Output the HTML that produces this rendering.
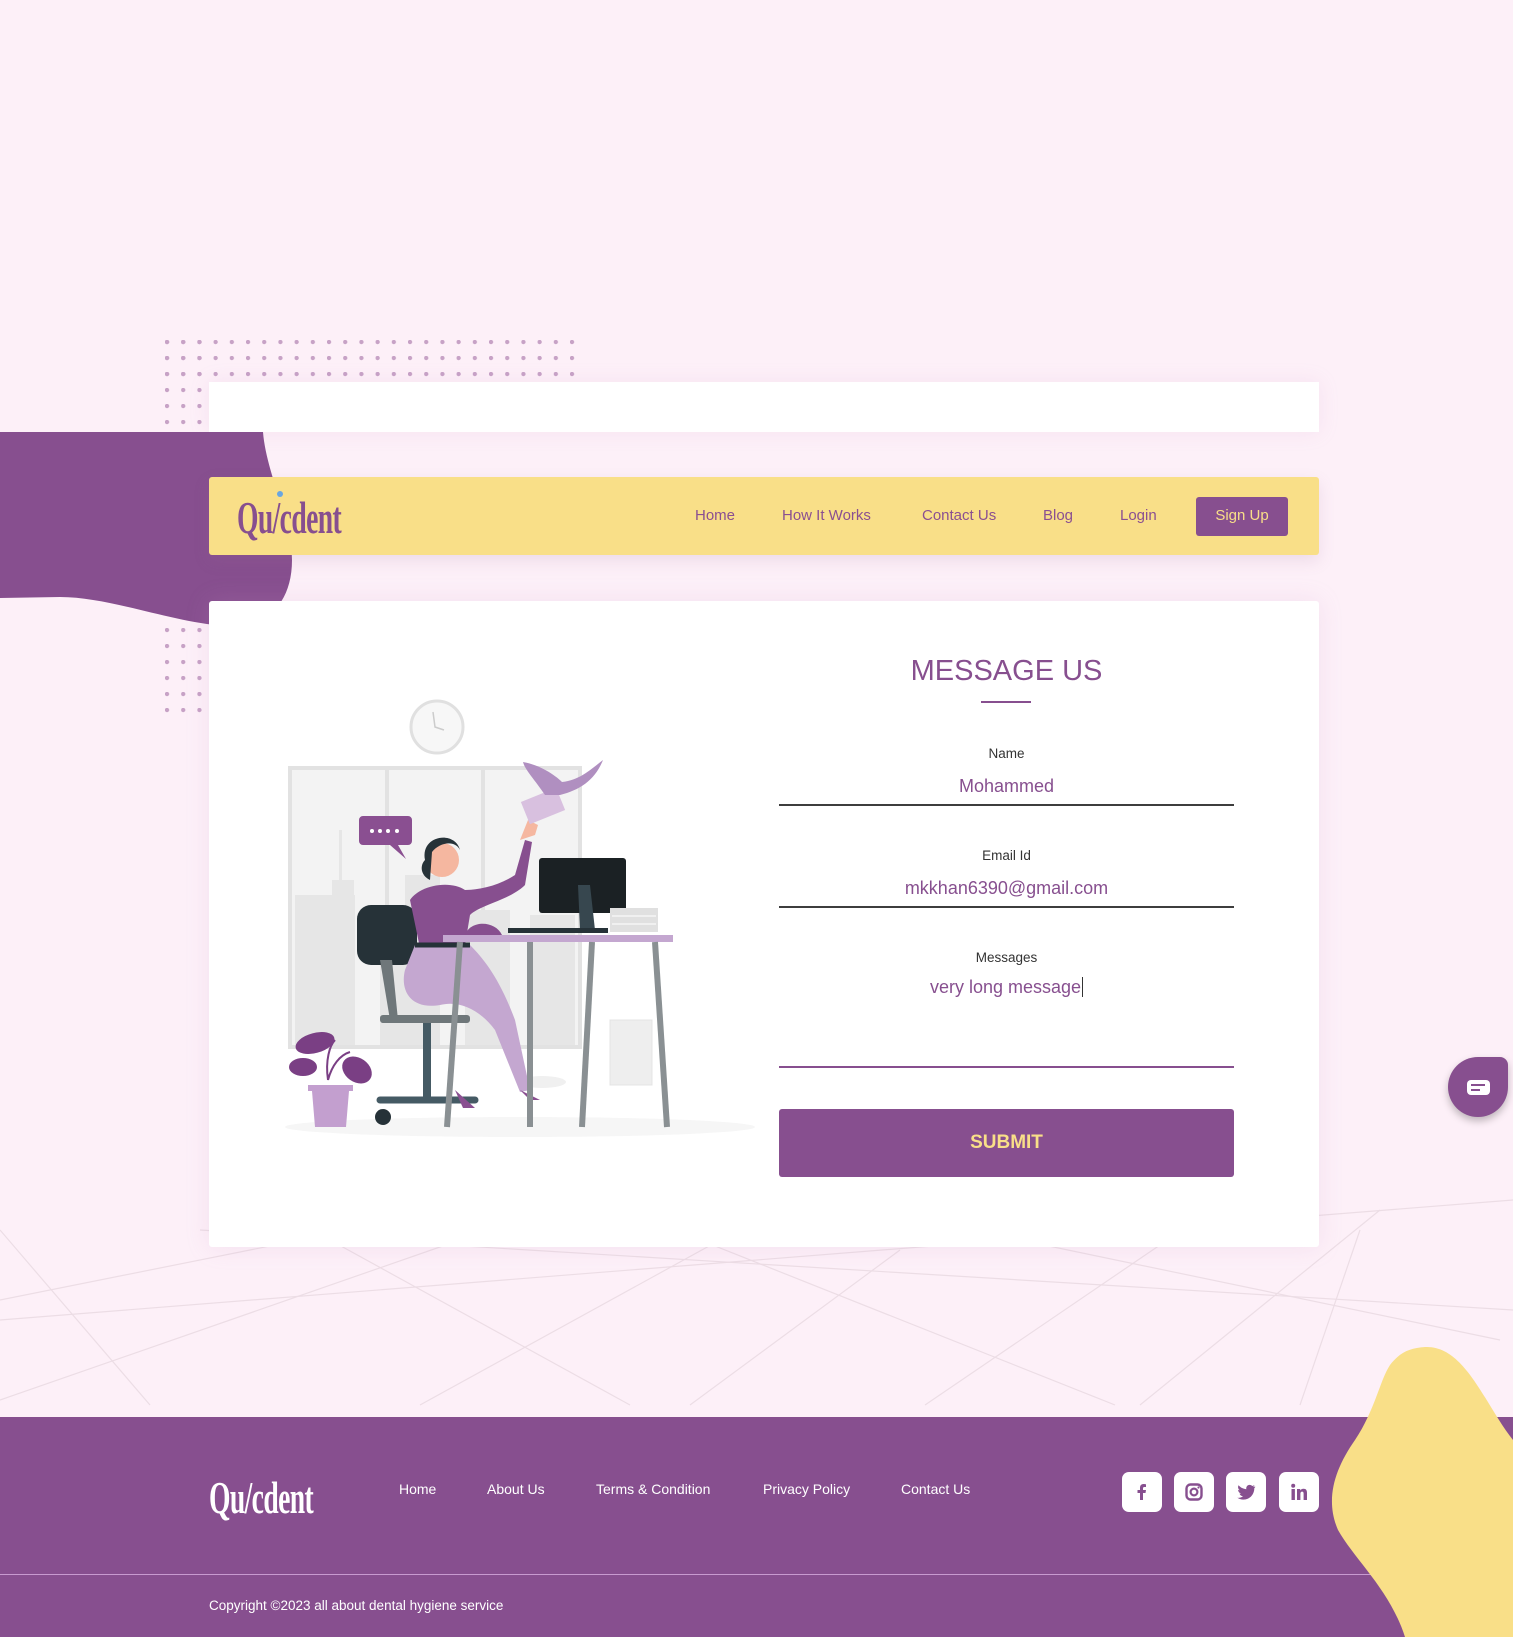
<!DOCTYPE html>
<html><head><meta charset="utf-8"><style>
*{margin:0;padding:0;box-sizing:border-box}
body{width:1513px;height:1637px;background:#fdf0f8;font-family:"Liberation Sans",sans-serif;position:relative;overflow:hidden}
.abs{position:absolute}
.logo{font-family:"Liberation Serif",serif;font-size:46px;font-weight:bold;letter-spacing:-1px;transform:scaleX(.6);transform-origin:left center;white-space:nowrap;line-height:1}
.nav a{position:absolute;top:497px;font-size:15px;color:#8a4f91;text-decoration:none;line-height:38px}
.lbl{position:absolute;left:779px;width:455px;text-align:center;font-size:13.5px;color:#333}
.val{position:absolute;left:779px;width:455px;text-align:center;font-size:18px;color:#874f8f}
.ln{position:absolute;left:779px;width:455px;height:2px;background:#3d3d3d}
.fl{position:absolute;top:1481px;color:#fff;font-size:14px}
.soc{position:absolute;top:1472px;width:40px;height:40px;background:#fff;border-radius:7px;display:flex;align-items:center;justify-content:center}
</style></head><body>
<svg class="abs" style="left:0;top:0" width="1513" height="1637">
<defs><pattern id="dp" x="165" y="340" width="16.2" height="16" patternUnits="userSpaceOnUse"><circle cx="2" cy="2" r="2.2" fill="#c7a2c6"/></pattern></defs>
<rect x="165" y="335" width="410" height="42" fill="url(#dp)"/>
<rect x="163" y="335" width="40" height="95" fill="url(#dp)"/>
<rect x="163" y="620" width="40" height="100" fill="url(#dp)"/>
<g stroke="#ecdde5" stroke-width="1.2" fill="none">
<line x1="0" y1="1300" x2="600" y2="1180"/><line x1="0" y1="1400" x2="460" y2="1240"/>
<line x1="0" y1="1230" x2="150" y2="1405"/><line x1="330" y1="1240" x2="630" y2="1405"/>
<line x1="420" y1="1405" x2="720" y2="1240"/><line x1="690" y1="1405" x2="900" y2="1250"/>
<line x1="700" y1="1240" x2="1115" y2="1405"/><line x1="925" y1="1405" x2="1160" y2="1245"/>
<line x1="1020" y1="1240" x2="1500" y2="1340"/><line x1="1140" y1="1405" x2="1380" y2="1210"/>
<line x1="1300" y1="1405" x2="1360" y2="1230"/><line x1="0" y1="1320" x2="1513" y2="1200"/>
<line x1="200" y1="1230" x2="1513" y2="1310"/>
</g>
</svg>
<div class="abs" style="left:209px;top:382px;width:1110px;height:50px;background:#fff;box-shadow:0 0 20px rgba(200,150,200,.15)"></div>
<svg class="abs" style="left:0;top:432px" width="300" height="200"><path d="M0,0 L263,0 C266,40 292,90 292,128 C292,175 262,198 225,194 C170,190 110,165 60,165 L0,166Z" fill="#874f8f"/></svg>
<div class="abs" style="left:209px;top:477px;width:1110px;height:78px;background:#f9df88;border-radius:3px;box-shadow:0 6px 16px rgba(150,100,150,.15)"></div>
<div class="abs logo" style="left:237px;top:495px;color:#874f8f">Qu/cdent</div>
<div class="abs" style="left:277px;top:491px;width:6px;height:6px;border-radius:50%;background:#6aa6e0"></div>
<div class="nav">
<a style="left:695px">Home</a><a style="left:782px">How It Works</a><a style="left:922px">Contact Us</a><a style="left:1043px">Blog</a><a style="left:1120px">Login</a>
<a style="left:1196px;width:92px;height:39px;background:#874f8f;color:#f9df88;border-radius:3px;text-align:center">Sign Up</a>
</div>
<div class="abs" style="left:209px;top:601px;width:1110px;height:646px;background:#fff;border-radius:3px;box-shadow:0 0 24px rgba(200,150,200,.18)"></div>
<svg class="abs" style="left:280px;top:690px" width="480" height="460" viewBox="0 0 480 460">
<ellipse cx="240" cy="437" rx="235" ry="10" fill="#f6f6f6"/>
<rect x="10" y="78" width="290" height="279" fill="#f3f3f3" stroke="#e2e2e2" stroke-width="4"/>
<line x1="107" y1="78" x2="107" y2="357" stroke="#e2e2e2" stroke-width="4"/><line x1="203" y1="78" x2="203" y2="357" stroke="#e2e2e2" stroke-width="4"/>
<g fill="#e6e6e6"><rect x="15" y="205" width="60" height="150"/><rect x="52" y="190" width="22" height="20"/><rect x="100" y="250" width="40" height="105"/><rect x="125" y="185" width="35" height="170"/><rect x="185" y="220" width="45" height="135"/><rect x="250" y="225" width="45" height="130"/><rect x="59" y="140" width="3" height="60"/></g>
<circle cx="157" cy="37" r="26" fill="#f7f7f7" stroke="#e0e0e0" stroke-width="3"/><path d="M153,22 L155,37 L164,40" stroke="#ccc" stroke-width="1.5" fill="none"/>
<ellipse cx="262" cy="392" rx="24" ry="6" fill="#f0f0f0"/><rect x="330" y="330" width="42" height="65" fill="#eee" stroke="#e4e4e4"/>
<path d="M79,130 a4,4 0 0 1 4,-4 h45 a4,4 0 0 1 4,4 v21 a4,4 0 0 1 -4,4 h-10 l8,14 l-16,-14 h-27 a4,4 0 0 1 -4,-4z" fill="#8a4f91"/>
<g fill="#fff"><circle cx="92" cy="141" r="2"/><circle cx="100" cy="141" r="2"/><circle cx="108" cy="141" r="2"/><circle cx="117" cy="141" r="2"/></g>
<rect x="77" y="215" width="60" height="60" rx="14" fill="#263238"/>
<path d="M100,270 L110,330 L118,330 L112,270Z" fill="#6f777a"/>
<rect x="100" y="325" width="90" height="8" rx="3" fill="#6f777a"/><rect x="143" y="333" width="8" height="75" fill="#455a64"/>
<path d="M100,410 L195,410" stroke="#455a64" stroke-width="7" stroke-linecap="round"/><circle cx="103" cy="427" r="8" fill="#263238"/>
<path d="M130,210 C140,195 170,190 185,200 C200,200 220,195 235,185 L245,150 L252,152 L245,195 C230,210 200,215 190,225 L185,255 L140,258Z" fill="#874f8f"/>
<path d="M135,255 L190,255 C205,270 220,290 235,330 L250,400 L240,402 L215,340 C200,320 180,310 160,315 C130,320 120,300 125,280Z" fill="#c4a7d0"/>
<path d="M135,255 L190,255" stroke="#263238" stroke-width="5"/>
<path d="M240,400 l10,10 h10 z" fill="#8a4f91"/><path d="M175,400 l8,18 h12z" fill="#8a4f91"/>
<circle cx="162" cy="170" r="17" fill="#f5b7a0"/><path d="M145,170 C140,145 175,140 180,160 C175,150 160,152 152,162 L150,190 C140,185 140,175 145,170Z" fill="#263238"/>
<path d="M240,150 L255,145 L258,135 L248,130Z" fill="#f5b7a0"/>
<rect x="244" y="104" width="38" height="24" transform="rotate(-22 263 116)" fill="#d8c0df"/>
<path d="M265,105 C255,90 245,80 243,72 C260,75 275,85 282,92 C300,90 310,80 323,70 C315,90 300,100 280,105Z" fill="#b08fc0"/>
<rect x="163" y="245" width="230" height="7" fill="#c4a7d0"/>
<g stroke="#8a9093" stroke-width="6"><line x1="180" y1="252" x2="167" y2="437"/><line x1="250" y1="252" x2="250" y2="437"/><line x1="312" y1="252" x2="302" y2="437"/><line x1="375" y1="252" x2="387" y2="437"/></g>
<rect x="259" y="168" width="87" height="55" rx="3" fill="#1b2124"/><path d="M298,195 L310,195 L315,240 L300,240Z" fill="#37474f"/>
<rect x="228" y="238" width="100" height="5" fill="#263238"/>
<rect x="330" y="218" width="48" height="24" fill="#e0e0e0"/><line x1="332" y1="226" x2="376" y2="226" stroke="#fff"/><line x1="332" y1="234" x2="376" y2="234" stroke="#fff"/>
<path d="M185,245 C190,230 215,230 222,245Z" fill="#874f8f"/>
<path d="M48,390 C45,370 50,355 55,350 M48,390 C52,375 60,365 70,362" stroke="#7a3f84" stroke-width="2" fill="none"/>
<ellipse cx="35" cy="353" rx="20" ry="10" fill="#7a3f84" transform="rotate(-15 35 353)"/><ellipse cx="23" cy="377" rx="14" ry="9" fill="#7a3f84"/><ellipse cx="77" cy="380" rx="16" ry="12" fill="#7a3f84" transform="rotate(35 77 380)"/>
<path d="M28,395 h45 v6 h-4 l-3,36 h-31 l-3,-36 h-4z" fill="#c39fcf"/>
</svg>
<div class="abs" style="left:779px;width:455px;top:655px;text-align:center;font-size:29px;color:#874f8f">MESSAGE US</div>
<div class="abs" style="left:981px;top:701px;width:50px;height:2px;background:#874f8f"></div>
<div class="lbl" style="top:746px">Name</div>
<div class="val" style="top:776px">Mohammed</div>
<div class="ln" style="top:804px"></div>
<div class="lbl" style="top:848px">Email Id</div>
<div class="val" style="top:878px">mkkhan6390@gmail.com</div>
<div class="ln" style="top:906px"></div>
<div class="lbl" style="top:950px">Messages</div>
<div class="val" style="top:977px">very long message<span style="border-left:1.5px solid #333;margin-left:1px"></span></div>
<div class="ln" style="top:1066px;background:#874f8f"></div>
<div class="abs" style="left:779px;top:1109px;width:455px;height:68px;background:#874f8f;border-radius:3px;color:#f9df88;font-weight:bold;font-size:19px;text-align:center;line-height:68px">SUBMIT</div>
<div class="abs" style="left:1448px;top:1057px;width:60px;height:60px;background:#874f8f;border-radius:50% 8px 50% 50%;box-shadow:0 4px 8px rgba(0,0,0,.25)"></div>
<div class="abs" style="left:1467px;top:1080px;width:23px;height:15px;background:#fff;border-radius:4px"></div>
<div class="abs" style="left:1471px;top:1084px;width:14px;height:2px;background:#874f8f"></div>
<div class="abs" style="left:1471px;top:1089px;width:9px;height:2px;background:#874f8f"></div>
<div class="abs" style="left:0;top:1417px;width:1513px;height:220px;background:#874f8f"></div>
<div class="abs" style="left:0;top:1574px;width:1513px;height:1px;background:#c89bd0"></div>
<div class="abs logo" style="left:209px;top:1475px;color:#fff">Qu/cdent</div>
<div class="fl" style="left:399px">Home</div><div class="fl" style="left:487px">About Us</div><div class="fl" style="left:596px">Terms &amp; Condition</div><div class="fl" style="left:763px">Privacy Policy</div><div class="fl" style="left:901px">Contact Us</div>
<div class="soc" style="left:1122px"><svg width="20" height="20" viewBox="0 0 20 20"><path d="M11,18 V11 H13.5 L14,8 H11 V6.5 C11,5.6 11.4,5 12.5,5 H14 V2.3 C13.5,2.2 12.5,2 11.5,2 C9.3,2 8,3.4 8,5.8 V8 H5.5 V11 H8 V18Z" fill="#874f8f"/></svg></div>
<div class="soc" style="left:1174px"><svg width="20" height="20" viewBox="0 0 20 20"><rect x="2.5" y="2.5" width="15" height="15" rx="4" fill="none" stroke="#874f8f" stroke-width="2.4"/><circle cx="10" cy="10" r="3.4" fill="none" stroke="#874f8f" stroke-width="2.2"/><circle cx="14.5" cy="5.5" r="1.1" fill="#874f8f"/></svg></div>
<div class="soc" style="left:1226px"><svg width="20" height="20" viewBox="0 0 20 20"><path d="M19,4.5 C18.3,4.8 17.6,5 16.9,5.1 C17.6,4.6 18.2,3.9 18.4,3.1 C17.7,3.5 17,3.8 16.2,4 C14.9,2.6 12.7,2.5 11.3,3.8 C10.4,4.7 10,6 10.3,7.2 C7.3,7 4.5,5.6 2.6,3.3 C1.6,5 2.1,7.2 3.8,8.3 C3.2,8.3 2.6,8.1 2.1,7.8 C2.1,9.6 3.4,11.1 5.1,11.5 C4.6,11.6 4,11.7 3.5,11.6 C4,13.1 5.4,14.2 7,14.2 C5.4,15.4 3.3,16 1.3,15.8 C3.1,17 5.2,17.6 7.3,17.6 C14.5,17.6 18.5,11.6 18.3,6 C19,5.5 19.6,4.9 19,4.5Z" fill="#874f8f"/></svg></div>
<div class="soc" style="left:1279px"><svg width="20" height="20" viewBox="0 0 20 20"><rect x="2.5" y="7" width="3.4" height="11" fill="#874f8f"/><circle cx="4.2" cy="3.8" r="2" fill="#874f8f"/><path d="M8,7 H11.2 V8.6 C11.8,7.5 13,6.8 14.5,6.8 C17.2,6.8 18,8.5 18,11 V18 H14.6 V11.8 C14.6,10.5 14.3,9.6 13.1,9.6 C11.9,9.6 11.4,10.5 11.4,11.8 V18 H8Z" fill="#874f8f"/></svg></div>
<div class="abs" style="left:209px;top:1598px;color:#fff;font-size:13.5px">Copyright ©2023 all about dental hygiene service</div>
<svg class="abs" style="left:0;top:0;pointer-events:none" width="1513" height="1637"><path d="M1425,1347 C1465,1345 1485,1405 1513,1440 L1513,1637 L1405,1637 C1390,1590 1355,1560 1338,1530 C1325,1500 1334,1470 1355,1440 C1375,1410 1380,1380 1390,1365 C1400,1352 1410,1348 1425,1347Z" fill="#f9df88"/></svg>
</body></html>
